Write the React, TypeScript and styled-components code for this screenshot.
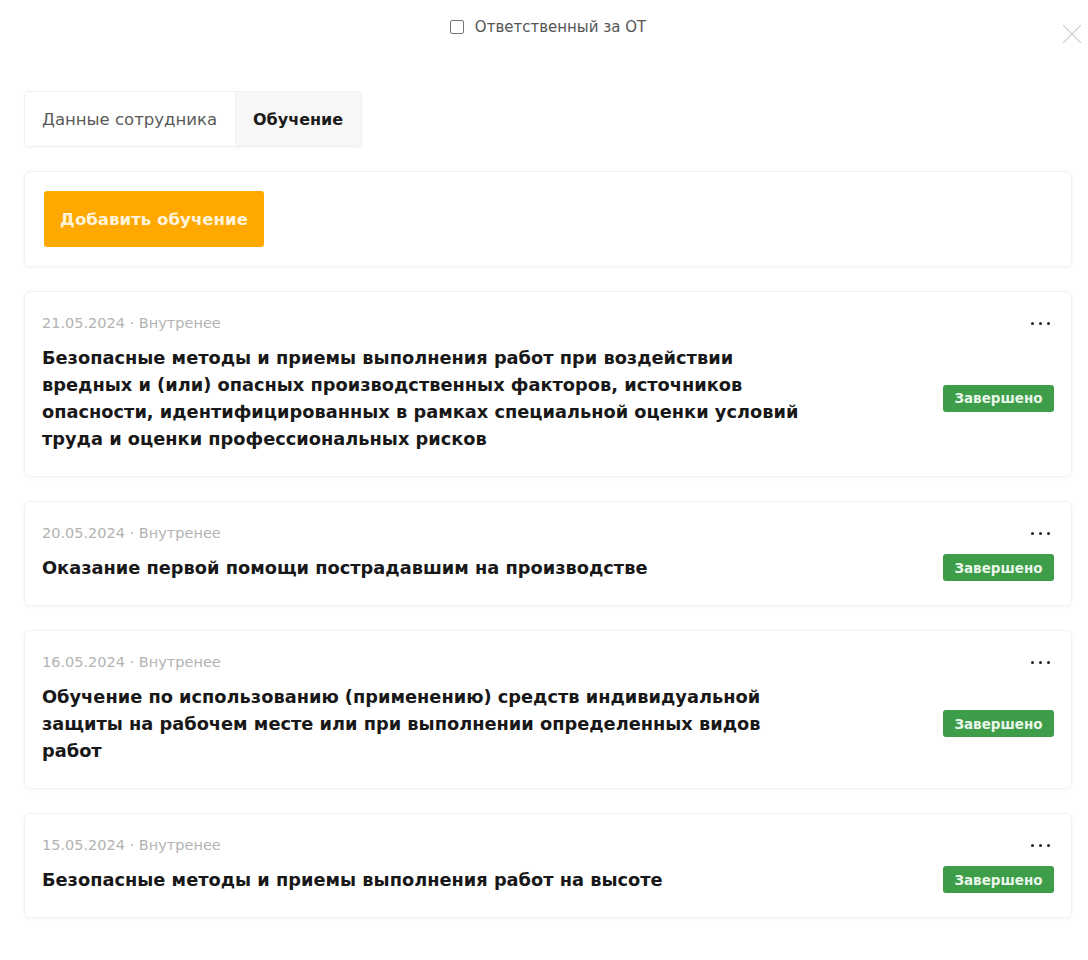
import styled, { createGlobalStyle } from "styled-components";

const GlobalStyle = createGlobalStyle`
  html, body {
    margin: 0;
    padding: 0;
    background: #ffffff;
  }
  body {
    font-family: "DejaVu Sans", "Noto Sans", sans-serif;
    color: #1b1b1b;
  }
`;

const Modal = styled.div`
  width: 1088px;
  min-height: 960px;
  box-sizing: border-box;
  padding: 0 16px 40px 24px;
  position: relative;
`;

const Header = styled.div`
  height: 54px;
  display: flex;
  align-items: center;
  justify-content: center;
`;

const CheckLabel = styled.label`
  display: flex;
  align-items: center;
  gap: 11px;
  font-size: 15px;
  color: #555;
`;

const CheckBox = styled.span`
  width: 14px;
  height: 14px;
  border: 1.5px solid #777;
  border-radius: 2px;
  box-sizing: border-box;
`;

const CloseButton = styled.button`
  position: absolute;
  top: 22px;
  right: 4px;
  width: 24px;
  height: 24px;
  padding: 0;
  border: 0;
  background: transparent;
  cursor: pointer;
`;

const Tabs = styled.div`
  display: inline-flex;
  margin-top: 37px;
  border: 1px solid #f0f0f0;
  border-radius: 4px;
  overflow: hidden;
  box-shadow: 0 1px 3px rgba(0, 0, 0, 0.03);
`;

const Tab = styled.button<{ $active?: boolean }>`
  height: 54px;
  padding: 0 18px 0 17px;
  border: 0;
  background: ${(p) => (p.$active ? "#f7f7f7" : "#ffffff")};
  font-family: inherit;
  font-size: ${(p) => (p.$active ? "16px" : "16.5px")};
  font-weight: ${(p) => (p.$active ? 700 : 400)};
  color: ${(p) => (p.$active ? "#1b1b1b" : "#5a5a5a")};
  cursor: pointer;
  & + & {
    border-left: 1px solid #f0f0f0;
  }
`;

const Card = styled.div`
  width: 1048px;
  box-sizing: border-box;
  background: #fff;
  border: 1px solid #f2f2f2;
  border-radius: 6px;
  box-shadow: 0 1px 4px rgba(0, 0, 0, 0.04);
`;

const ActionCard = styled(Card)`
  margin-top: 24px;
  padding: 19px 19px;
`;

const AddButton = styled.button`
  width: 220px;
  height: 56px;
  border: 0;
  border-radius: 3px;
  background: #ffa800;
  color: #fff3dc;
  font-family: inherit;
  font-size: 16.6px;
  font-weight: 700;
  cursor: pointer;
`;

const List = styled.div`
  display: flex;
  flex-direction: column;
  gap: 24px;
  margin-top: 24px;
`;

const TrainingCard = styled(Card)`
  padding: 21px 17px 24px 17px;
`;

const MetaRow = styled.div`
  display: flex;
  align-items: center;
  justify-content: space-between;
  height: 20px;
`;

const Meta = styled.span`
  font-size: 14.5px;
  color: #b3b3b3;
`;

const Dots = styled.button`
  display: flex;
  gap: 5px;
  padding: 0 4px 0 0;
  border: 0;
  background: transparent;
  cursor: pointer;
  span {
    width: 3px;
    height: 3px;
    border-radius: 50%;
    background: #222;
  }
`;

const Body = styled.div`
  display: flex;
  align-items: center;
  justify-content: space-between;
  margin-top: 11px;
`;

const Title = styled.div`
  max-width: 770px;
  font-size: 17.8px;
  font-weight: 700;
  line-height: 27px;
  color: #181818;
`;

const Badge = styled.span`
  flex-shrink: 0;
  width: 111px;
  height: 27px;
  border-radius: 3px;
  background: #3d9d48;
  color: #e9f6ea;
  font-size: 13.5px;
  font-weight: 700;
  display: flex;
  align-items: center;
  justify-content: center;
`;

type Training = {
  date: string;
  kind: string;
  title: string;
};

const trainings: Training[] = [
  {
    date: "21.05.2024",
    kind: "Внутренее",
    title:
      "Безопасные методы и приемы выполнения работ при воздействии вредных и (или) опасных производственных факторов, источников опасности, идентифицированных в рамках специальной оценки условий труда и оценки профессиональных рисков",
  },
  {
    date: "20.05.2024",
    kind: "Внутренее",
    title: "Оказание первой помощи пострадавшим на производстве",
  },
  {
    date: "16.05.2024",
    kind: "Внутренее",
    title:
      "Обучение по использованию (применению) средств индивидуальной защиты на рабочем месте или при выполнении определенных видов работ",
  },
  {
    date: "15.05.2024",
    kind: "Внутренее",
    title: "Безопасные методы и приемы выполнения работ на высоте",
  },
];

function TrainingItem({ item }: { item: Training }) {
  return (
    <TrainingCard>
      <MetaRow>
        <Meta>
          {item.date} · {item.kind}
        </Meta>
        <Dots aria-label="Меню">
          <span />
          <span />
          <span />
        </Dots>
      </MetaRow>
      <Body>
        <Title>{item.title}</Title>
        <Badge>Завершено</Badge>
      </Body>
    </TrainingCard>
  );
}

export default function App() {
  return (
    <>
      <GlobalStyle />
      <Modal>
        <Header>
          <CheckLabel>
            <CheckBox />
            Ответственный за ОТ
          </CheckLabel>
        </Header>
        <CloseButton aria-label="Закрыть">
          <svg width="24" height="24" viewBox="0 0 24 24">
            <path
              d="M3 3 L21 21 M21 3 L3 21"
              stroke="#d2d2d2"
              strokeWidth="1.4"
              fill="none"
            />
          </svg>
        </CloseButton>
        <Tabs>
          <Tab>Данные сотрудника</Tab>
          <Tab $active>Обучение</Tab>
        </Tabs>
        <ActionCard>
          <AddButton>Добавить обучение</AddButton>
        </ActionCard>
        <List>
          {trainings.map((t) => (
            <TrainingItem key={t.date} item={t} />
          ))}
        </List>
      </Modal>
    </>
  );
}
